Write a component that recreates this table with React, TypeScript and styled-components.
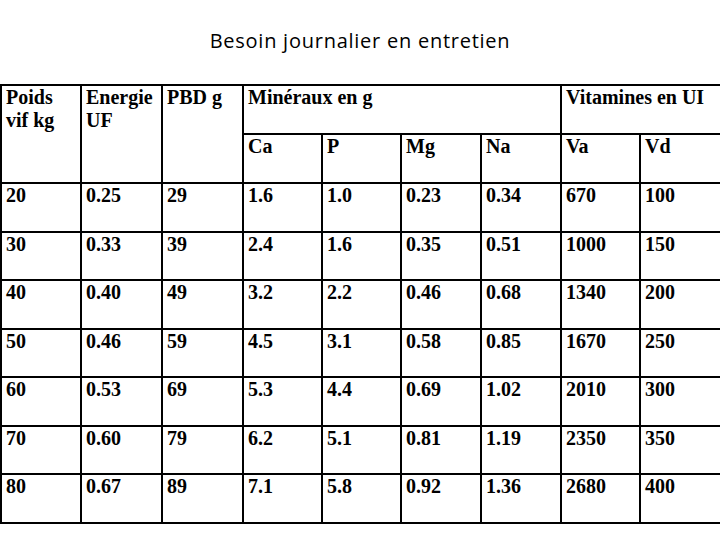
import React from 'react';
import styled, { createGlobalStyle } from 'styled-components';

const GlobalStyle = createGlobalStyle`
  *, *::before, *::after {
    box-sizing: border-box;
  }
  html, body {
    margin: 0;
    padding: 0;
    background: #fff;
  }
`;

const Page = styled.div`
  width: 720px;
  height: 540px;
  background: #fff;
  overflow: hidden;
`;

const Title = styled.h1`
  margin: 0;
  height: 84px;
  padding-top: 27px;
  text-align: center;
  font-family: 'Open Sans', 'Noto Sans', sans-serif;
  font-weight: 400;
  font-size: 20px;
  letter-spacing: 0.75px;
  line-height: 28px;
  color: #000;
`;

const Table = styled.table`
  width: 720px;
  table-layout: fixed;
  border-collapse: separate;
  border-spacing: 0;
  border-top: 2px solid #000;
  border-left: 2px solid #000;
  font-family: 'Liberation Serif', 'Times New Roman', serif;
  font-weight: 700;
  font-size: 20px;
  line-height: 23px;
  color: #000;
`;

const Row = styled.tr<{ $h: number }>`
  height: ${(p) => p.$h}px;
`;

const Cell = styled.td`
  vertical-align: top;
  padding: 0 4px 0 4px;
  border-right: 2px solid #000;
  border-bottom: 2px solid #000;
  white-space: nowrap;
`;

const colWidths = [80, 81, 81, 79, 79, 80, 80, 79, 81];

const rows = [
  ['20', '0.25', '29', '1.6', '1.0', '0.23', '0.34', '670', '100'],
  ['30', '0.33', '39', '2.4', '1.6', '0.35', '0.51', '1000', '150'],
  ['40', '0.40', '49', '3.2', '2.2', '0.46', '0.68', '1340', '200'],
  ['50', '0.46', '59', '4.5', '3.1', '0.58', '0.85', '1670', '250'],
  ['60', '0.53', '69', '5.3', '4.4', '0.69', '1.02', '2010', '300'],
  ['70', '0.60', '79', '6.2', '5.1', '0.81', '1.19', '2350', '350'],
  ['80', '0.67', '89', '7.1', '5.8', '0.92', '1.36', '2680', '400'],
];

export default function App() {
  return (
    <Page>
      <GlobalStyle />
      <Title>Besoin journalier en entretien</Title>
      <Table>
        <colgroup>
          {colWidths.map((w, i) => (
            <col key={i} style={{ width: w }} />
          ))}
        </colgroup>
        <tbody>
          <Row $h={49}>
            <Cell rowSpan={2}>
              Poids
              <br />
              vif kg
            </Cell>
            <Cell rowSpan={2}>
              Energie
              <br />
              UF
            </Cell>
            <Cell rowSpan={2}>PBD g</Cell>
            <Cell colSpan={4}>Minéraux en g</Cell>
            <Cell colSpan={2}>Vitamines en UI</Cell>
          </Row>
          <Row $h={49}>
            {['Ca', 'P', 'Mg', 'Na', 'Va', 'Vd'].map((h) => (
              <Cell key={h}>{h}</Cell>
            ))}
          </Row>
          {rows.map((r) => (
            <Row key={r[0]} $h={48.57}>
              {r.map((v, i) => (
                <Cell key={i}>{v}</Cell>
              ))}
            </Row>
          ))}
        </tbody>
      </Table>
    </Page>
  );
}
